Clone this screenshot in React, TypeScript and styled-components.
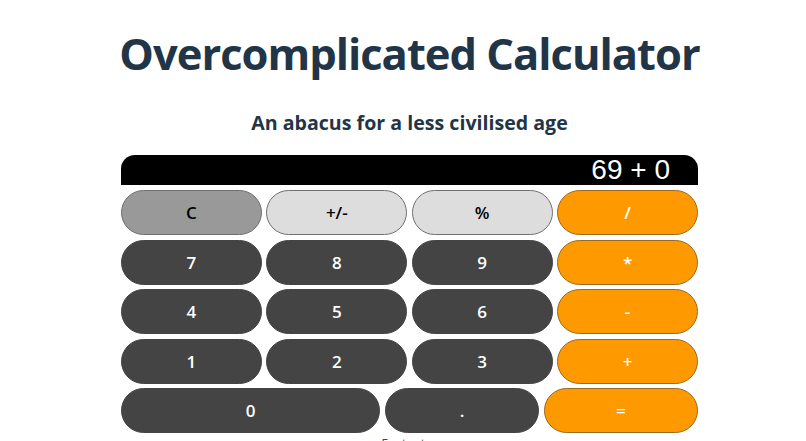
import { createGlobalStyle, styled, css } from 'styled-components';
import { FunctionComponent } from 'react';

const GlobalStyle = createGlobalStyle`
  html, body {
    margin: 0;
    padding: 0;
    background: #ffffff;
    color: #213547;
    font-family: 'Open Sans', 'Noto Sans', sans-serif;
  }
`;

const Page = styled.main`
  display: flex;
  flex-direction: column;
  align-items: center;
  padding: 0 0 0 13px;
`;

const Title = styled.h1`
  margin: 26px 0 0;
  font-size: 43.5px;
  font-weight: 700;
  line-height: 56px;
  letter-spacing: -1px;
`;

const Subtitle = styled.h2`
  margin: 27px 0 0;
  font-size: 19.6px;
  font-weight: 700;
  line-height: 28px;
`;

const Calculator = styled.section`
  width: 577px;
  margin-top: 18px;
  display: flex;
  flex-direction: column;
  gap: 4.5px;
`;

const Display = styled.div`
  height: 30px;
  background: #000000;
  border-radius: 14px 14px 0 0;
  color: #ffffff;
  font-family: 'Liberation Sans', Arial, sans-serif;
  font-size: 28px;
  line-height: 30px;
  text-align: right;
  padding: 0 28px;
  margin-bottom: 0.5px;
`;

const Row = styled.div`
  display: flex;
  gap: 4.5px;
`;

type Variant = 'clear' | 'light' | 'digit' | 'operator';

const variants = {
  clear: css`
    background: #999999;
    color: #000000;
    border-color: #6f6f6f;
  `,
  light: css`
    background: #dddddd;
    color: #000000;
    border-color: #707070;
  `,
  digit: css`
    background: #444444;
    color: #ffffff;
    border-color: #444444;
  `,
  operator: css`
    background: #ff9900;
    color: #ffffff;
    border-color: #9a6a20;
  `,
};

const Key = styled.button<{ $variant: Variant; $grow?: number }>`
  flex: ${({ $grow }) => $grow ?? 1} 1 0;
  min-width: 0;
  height: 45px;
  padding: 0;
  border: 1px solid;
  border-radius: 23px;
  font-family: 'Open Sans', 'Noto Sans', sans-serif;
  font-size: 17px;
  font-weight: 600;
  cursor: pointer;
  ${({ $variant }) => variants[$variant]}
`;

const Footer = styled.p`
  margin: 3px 0 0;
  font-size: 12px;
  line-height: 16px;
  color: #444444;
`;

const rows: { label: string; variant: Variant; grow?: number }[][] = [
  [
    { label: 'C', variant: 'clear' },
    { label: '+/-', variant: 'light' },
    { label: '%', variant: 'light' },
    { label: '/', variant: 'operator' },
  ],
  [
    { label: '7', variant: 'digit' },
    { label: '8', variant: 'digit' },
    { label: '9', variant: 'digit' },
    { label: '*', variant: 'operator' },
  ],
  [
    { label: '4', variant: 'digit' },
    { label: '5', variant: 'digit' },
    { label: '6', variant: 'digit' },
    { label: '-', variant: 'operator' },
  ],
  [
    { label: '1', variant: 'digit' },
    { label: '2', variant: 'digit' },
    { label: '3', variant: 'digit' },
    { label: '+', variant: 'operator' },
  ],
  [
    { label: '0', variant: 'digit', grow: 1.69 },
    { label: '.', variant: 'digit' },
    { label: '=', variant: 'operator' },
  ],
];

const App: FunctionComponent = () => {
  return (
    <>
      <GlobalStyle />
      <Page>
        <Title>Overcomplicated Calculator</Title>
        <Subtitle>An abacus for a less civilised age</Subtitle>
        <Calculator>
          <Display>69 + 0</Display>
          {rows.map((row, i) => (
            <Row key={i}>
              {row.map((key) => (
                <Key key={key.label} $variant={key.variant} $grow={key.grow}>
                  {key.label}
                </Key>
              ))}
            </Row>
          ))}
        </Calculator>
        <Footer>Footnotes</Footer>
      </Page>
    </>
  );
};

export default App;
